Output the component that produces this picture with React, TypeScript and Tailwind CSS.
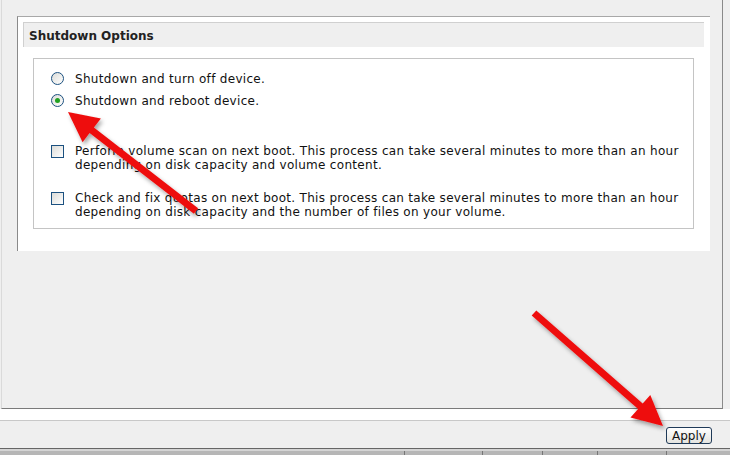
import React from "react";

function Radio({ checked }: { checked?: boolean }) {
  return (
    <span className="relative flex h-[13px] w-[13px] shrink-0 items-center justify-center rounded-full border border-[#1c5180] bg-gradient-to-br from-[#dcdcd8] to-[#ffffff]">
      {checked && <span className="h-[5px] w-[5px] rounded-full bg-[#21a121]" />}
    </span>
  );
}

function Checkbox() {
  return (
    <span className="block h-[13px] w-[13px] shrink-0 border border-[#1c5180] bg-gradient-to-br from-[#dcdcd8] to-[#ffffff]" />
  );
}

function Arrow({ x1, y1, x2, y2 }: { x1: number; y1: number; x2: number; y2: number }) {
  const dx = x2 - x1;
  const dy = y2 - y1;
  const len = Math.hypot(dx, dy);
  const ux = dx / len;
  const uy = dy / len;
  const px = -uy;
  const py = ux;
  const head = 30;
  const half = 15;
  const shaft = 3.5;
  const bx = x2 - ux * head;
  const by = y2 - uy * head;
  const pts = [
    [x1 + px * shaft, y1 + py * shaft],
    [bx + px * shaft, by + py * shaft],
    [bx + px * half, by + py * half],
    [x2, y2],
    [bx - px * half, by - py * half],
    [bx - px * shaft, by - py * shaft],
    [x1 - px * shaft, y1 - py * shaft],
  ]
    .map((p) => p.map((v) => v.toFixed(1)).join(","))
    .join(" ");
  return <polygon points={pts} fill="#ee1111" filter="url(#arrowShadow)" />;
}

export default function App() {
  return (
    <div
      className="relative h-[455px] w-[730px] overflow-hidden bg-[#efefef] text-[12px] text-[#111]"
      style={{ fontFamily: '"DejaVu Sans", Verdana, sans-serif' }}
    >
      {/* main settings panel */}
      <div className="ml-[1px] h-[409px] w-[722px] border-b border-l border-r border-b-[#7a7a7a] border-l-[#dadada] border-r-[#8a8a8a] pl-[15px] pt-[16px]">
        <div className="h-[235px] w-[693px] border-l border-t border-l-[#8a8a8a] border-t-[#a8a8a8] bg-white pl-[5px] pt-[5px]">
          <div className="flex h-[25px] w-[681px] items-center border-l border-t border-[#d0d0d0] bg-[#efefef] pl-[5px] pt-[1px] font-bold text-[#222]">
            Shutdown Options
          </div>
          <div className="ml-[10px] mt-[11px] h-[171px] w-[661px] border border-[#c4c4c4] pl-[17px] pt-[12px] leading-[14px] tracking-[0.3px]">
            <div className="flex h-[15px] items-center gap-[11px]">
              <Radio />
              <span>Shutdown and turn off device.</span>
            </div>
            <div className="mt-[7px] flex h-[15px] items-center gap-[11px]">
              <Radio checked />
              <span>Shutdown and reboot device.</span>
            </div>
            <div className="mt-[36px] flex items-start gap-[11px]">
              <span className="pt-[1px]">
                <Checkbox />
              </span>
              <div>
                <div>Perform volume scan on next boot. This process can take several minutes to more than an hour</div>
                <div>depending on disk capacity and volume content.</div>
              </div>
            </div>
            <div className="mt-[19px] flex items-start gap-[11px]">
              <span className="pt-[1px]">
                <Checkbox />
              </span>
              <div>
                <div>Check and fix quotas on next boot. This process can take several minutes to more than an hour</div>
                <div>depending on disk capacity and the number of files on your volume.</div>
              </div>
            </div>
          </div>
        </div>
      </div>

      {/* footer strip */}
      <div className="h-[12px] border-b border-[#c8c8c8] bg-white" />
      <div className="flex h-[27px] items-start justify-end pr-[18px] pt-[6px]">
        <button className="flex h-[17px] w-[46px] items-center justify-center rounded-[3px] border border-[#1f3a58] bg-gradient-to-b from-[#ffffff] to-[#e4e4e0] text-[12px] leading-none text-[#111]">
          Apply
        </button>
      </div>
      <div className="h-[1px] bg-[#666]" />
      <div className="h-[2px] bg-[#d4d4d4]" />
      <div className="flex h-[4px] bg-[#b6b6b6]">
        <div className="w-[405px] border-r border-[#777]" />
        <div className="w-[78px] border-r border-[#777]" />
        <div className="w-[60px] border-r border-[#777]" />
        <div className="w-[55px] border-r border-[#777]" />
        <div className="w-[69px] border-r border-[#777]" />
      </div>

      {/* red pointer arrows */}
      <svg className="pointer-events-none absolute left-0 top-0" width="730" height="455">
        <defs>
          <filter id="arrowShadow" x="-20%" y="-20%" width="140%" height="140%">
            <feDropShadow dx="2" dy="3" stdDeviation="2" floodColor="#000" floodOpacity="0.35" />
          </filter>
        </defs>
        <Arrow x1={196} y1={211} x2={68} y2={112} />
        <Arrow x1={534} y1={313} x2={663} y2={426} />
      </svg>
    </div>
  );
}
